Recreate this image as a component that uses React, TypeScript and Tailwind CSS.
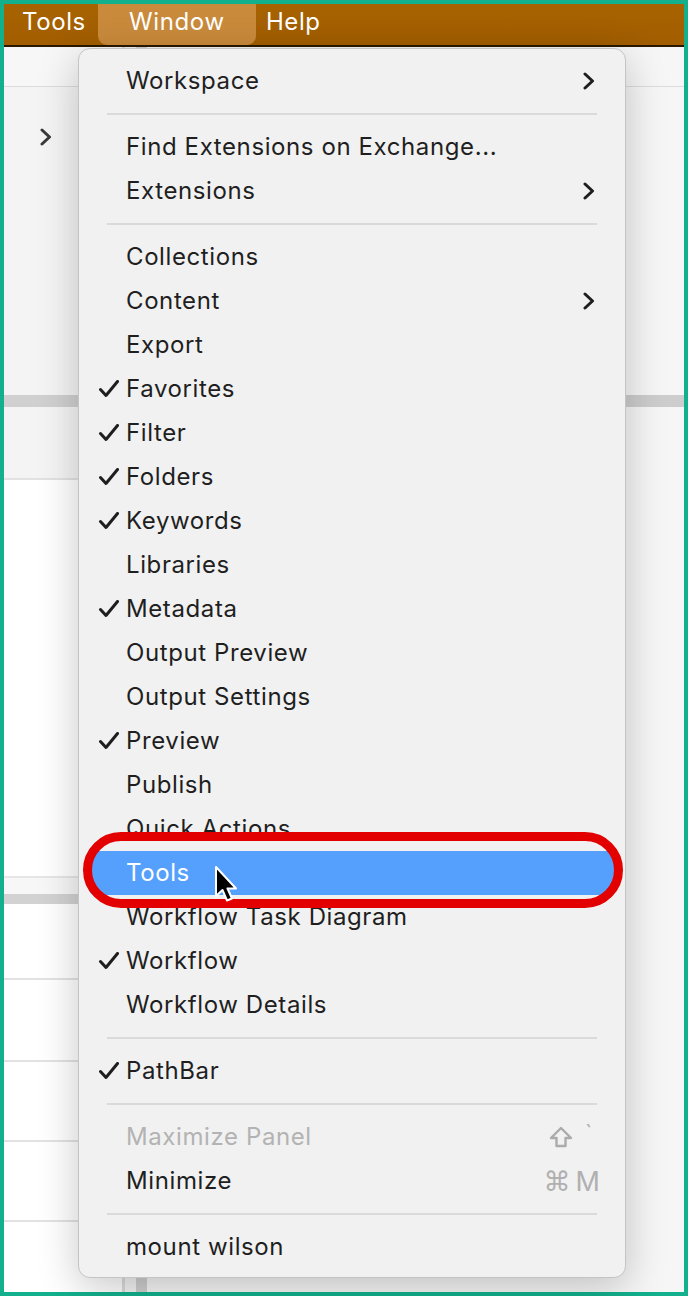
import type { ReactNode } from "react";

type MenuRow =
  | { kind: "sep" }
  | {
      kind: "item";
      label: string;
      check?: boolean;
      sub?: boolean;
      shortcut?: ReactNode;
      disabled?: boolean;
      active?: boolean;
    };

const item = (label: string, extra: Partial<Omit<Extract<MenuRow, { kind: "item" }>, "kind" | "label">> = {}): MenuRow => ({
  kind: "item",
  label,
  ...extra,
});
const sep: MenuRow = { kind: "sep" };

const ShiftKey = () => (
  <svg width="24" height="22" viewBox="0 0 24 22" fill="none">
    <path
      d="M12 2 L22 12 L16.5 12 L16.5 20 L7.5 20 L7.5 12 L2 12 Z"
      stroke="#ababab"
      strokeWidth="2.4"
      strokeLinejoin="round"
    />
  </svg>
);

const rows: MenuRow[] = [
  item("Workspace", { sub: true }),
  sep,
  item("Find Extensions on Exchange..."),
  item("Extensions", { sub: true }),
  sep,
  item("Collections"),
  item("Content", { sub: true }),
  item("Export"),
  item("Favorites", { check: true }),
  item("Filter", { check: true }),
  item("Folders", { check: true }),
  item("Keywords", { check: true }),
  item("Libraries"),
  item("Metadata", { check: true }),
  item("Output Preview"),
  item("Output Settings"),
  item("Preview", { check: true }),
  item("Publish"),
  item("Quick Actions"),
  item("Tools", { active: true }),
  item("Workflow Task Diagram"),
  item("Workflow", { check: true }),
  item("Workflow Details"),
  sep,
  item("PathBar", { check: true }),
  sep,
  item("Maximize Panel", {
    disabled: true,
    shortcut: (
      <span className="flex items-center gap-[12px] pr-[8px]">
        <ShiftKey />
        <span className="-mt-[8px] text-[22px]">`</span>
      </span>
    ),
  }),
  item("Minimize", {
    shortcut: (
      <span className="flex items-center gap-[5px]">
        <span className="font-['DejaVu_Sans',sans-serif] text-[27px]">⌘</span>
        <span className="text-[27px]">M</span>
      </span>
    ),
  }),
  sep,
  item("mount wilson"),
];

const Check = () => (
  <svg width="20" height="18" viewBox="0 0 20 18" fill="none">
    <path d="M1.5 9.5 L7 15.5 L18.5 1.5" stroke="#1e1e1e" strokeWidth="3" strokeLinecap="round" strokeLinejoin="round" />
  </svg>
);

const Chevron = ({ color = "#1e1e1e" }: { color?: string }) => (
  <svg width="12" height="18" viewBox="0 0 12 18" fill="none">
    <path d="M2 2 L9.5 9 L2 16" stroke={color} strokeWidth="3" strokeLinecap="round" strokeLinejoin="round" />
  </svg>
);

const Cursor = () => (
  <svg width="24" height="38" viewBox="0 0 24 38">
    <path
      d="M2 1 L2 30 L8.5 24 L13 34.5 L18 32.5 L13.5 22.5 L22 22.5 Z"
      fill="#000"
      stroke="#fff"
      strokeWidth="2"
      strokeLinejoin="round"
    />
  </svg>
);

const Row = ({ row }: { row: MenuRow }) => {
  if (row.kind === "sep") {
    return <div className="mx-[28px] my-[10px] h-[2px] bg-[#dadada]" />;
  }
  const textColor = row.active ? "text-white" : row.disabled ? "text-[#b3b3b3]" : "text-[#1f1f1f]";
  return (
    <div
      className={`flex h-[44px] items-center rounded-[6px] mx-[10px] ${row.shortcut ? "pr-[15px]" : "pr-[20px]"} ${row.active ? "bg-[#55a0fc]" : ""} ${textColor}`}
    >
      <div className="flex w-[37px] shrink-0 items-center pl-[10px]">{row.check ? <Check /> : null}</div>
      <span className="flex-1 whitespace-nowrap">{row.label}</span>
      {row.sub ? <Chevron /> : null}
      {row.shortcut ? <span className="text-[#b0b0b0] tracking-normal">{row.shortcut}</span> : null}
    </div>
  );
};

export default function App() {
  return (
    <div className="relative h-[1296px] w-[688px] overflow-hidden bg-[#12b08c] p-[4px] font-['Inter',sans-serif] text-[24px] leading-none tracking-[0.6px]">
      <div className="flex h-full flex-col bg-[#f4f4f4]">
        {/* menu bar */}
        <div className="flex h-[41px] shrink-0 items-stretch bg-gradient-to-b from-[#a86300] to-[#a15d00] text-white">
          <span className="ml-[18px] flex items-center pb-[6px]">Tools</span>
          <div className="ml-[12px] flex w-[158px] items-center justify-center rounded-b-[9px] bg-[#c98a3b] pb-[6px]">
            Window
          </div>
          <span className="ml-[10px] flex items-center pb-[6px]">Help</span>
        </div>
        <div className="h-[2px] shrink-0 bg-[#2a1800]" />

        {/* app underneath */}
        <div className="flex flex-1 overflow-hidden">
          <div className="flex w-[118px] shrink-0 flex-col">
            <div className="h-[40px] border-b border-[#dcdcdc] bg-[#f7f7f7]" />
            <div className="h-[308px] bg-[#f4f4f4] pl-[36px] pt-[41px]">
              <Chevron color="#3a3a3a" />
            </div>
            <div className="h-[12px] bg-[#d0d0d0]" />
            <div className="h-[73px] border-b-2 border-[#e2e2e2] bg-[#f4f4f4]" />
            <div className="h-[398px] border-b-2 border-[#e6e6e6] bg-white" />
            <div className="h-[16px] bg-[#f7f7f7]" />
            <div className="h-[10px] bg-[#d2d2d2]" />
            <div className="h-[76px] border-b-2 border-[#e2e2e2] bg-white" />
            <div className="h-[82px] border-b-2 border-[#e2e2e2] bg-white" />
            <div className="h-[80px] border-b-2 border-[#e2e2e2] bg-white" />
            <div className="h-[80px] border-b-2 border-[#e2e2e2] bg-white" />
            <div className="flex-1 bg-white" />
          </div>
          <div className="w-[3px] shrink-0 bg-[#dcdcdc]" />
          <div className="flex flex-1">
            <div className="ml-[11px] w-[11px] bg-[#cfcfcf]" />
            <div className="flex flex-1 flex-col">
              <div className="h-[40px] border-b border-[#dcdcdc] bg-[#f6f6f6]" />
              <div className="h-[308px] bg-[#f6f6f6]" />
              <div className="h-[12px] bg-[#cdcdcd]" />
              <div className="flex-1 bg-[#f6f6f6]" />
            </div>
          </div>
        </div>
      </div>

      {/* Window menu */}
      <div className="absolute left-[78px] top-[48px] w-[548px] rounded-[12px] border border-[#c4c4c4] bg-[#f1f1f1] pb-[8px] pt-[10px] shadow-[0_10px_40px_rgba(0,0,0,0.22)]">
        {rows.map((row, i) => (
          <Row key={i} row={row} />
        ))}
      </div>

      {/* annotation ring */}
      <div className="absolute left-[83px] top-[832px] h-[76px] w-[540px] rounded-full border-[9px] border-[#e20000]" />

      <div className="absolute left-[214px] top-[866px]">
        <Cursor />
      </div>
    </div>
  );
}
